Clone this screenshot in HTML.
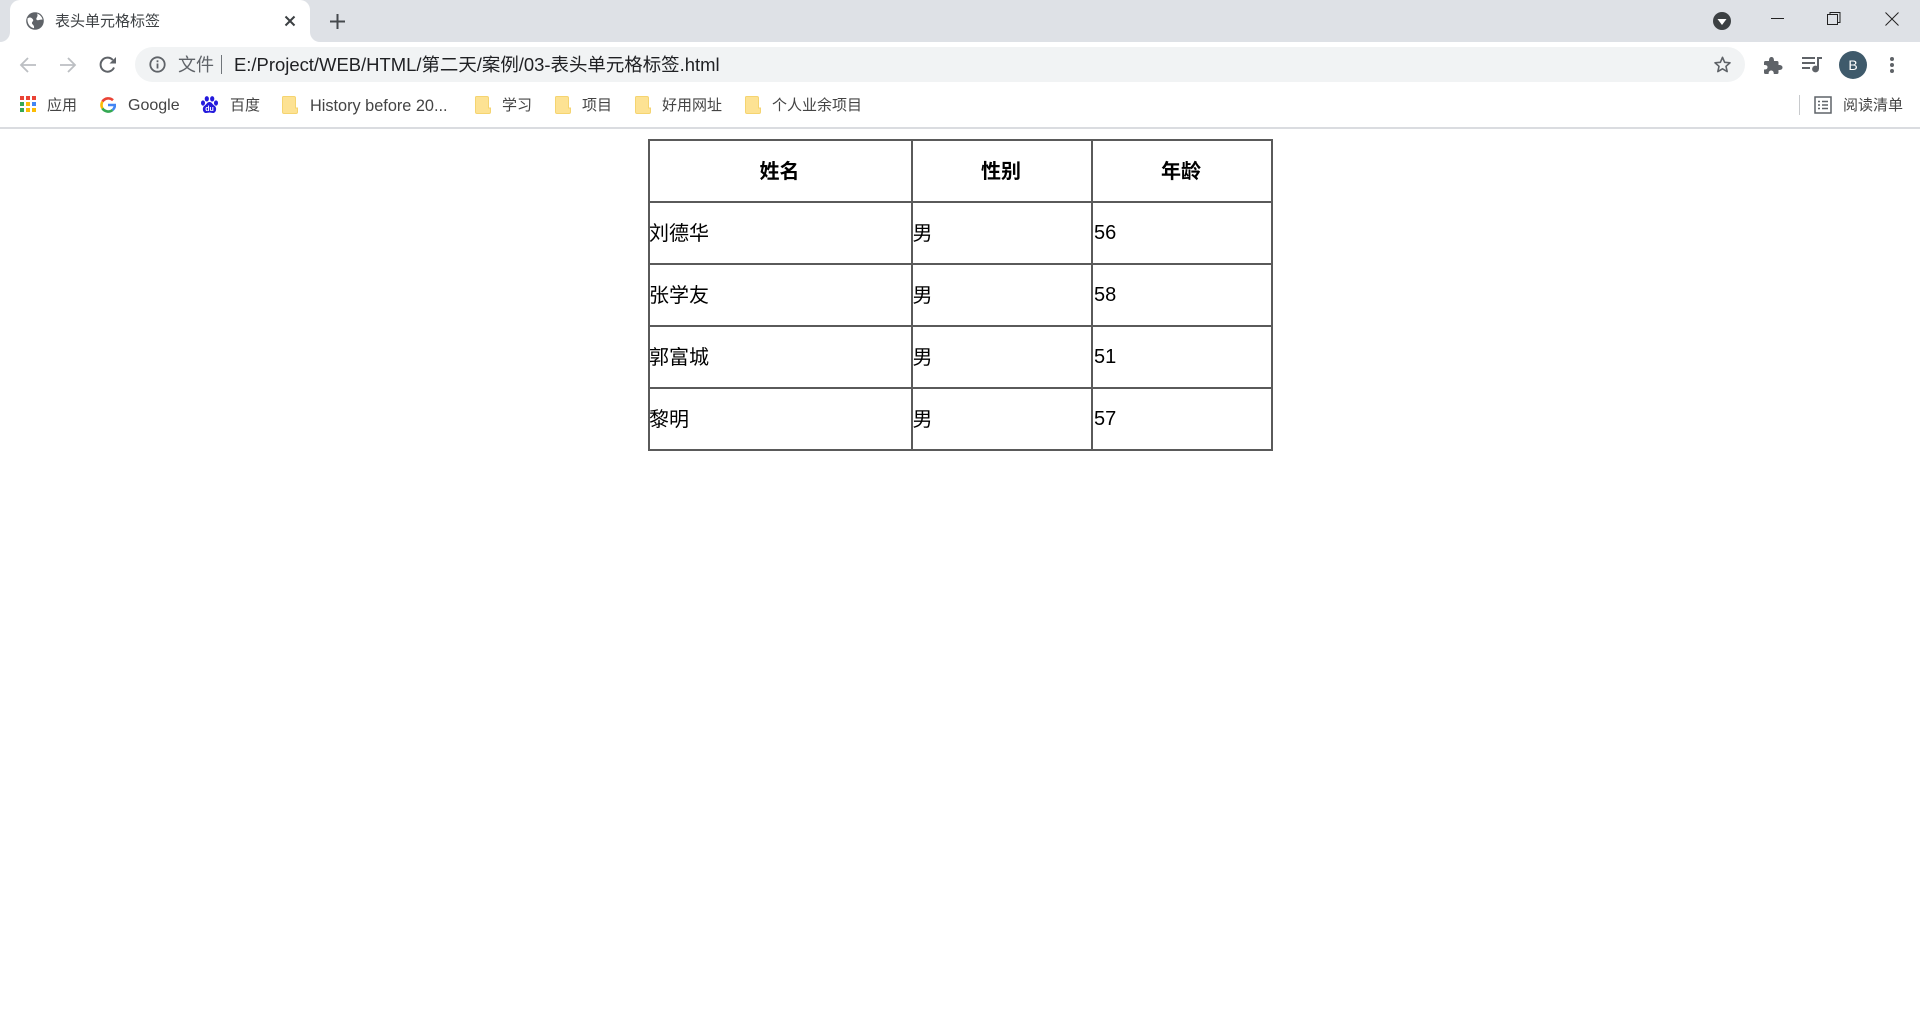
<!DOCTYPE html>
<html lang="zh">
<head>
<meta charset="utf-8">
<title>表头单元格标签</title>
<style>
html,body{margin:0;padding:0;width:1920px;height:1030px;overflow:hidden;background:#fff;font-family:"Liberation Sans","Noto Sans CJK SC",sans-serif;}
.a{position:absolute;white-space:nowrap;}
svg{position:absolute;display:block;}
.bm{position:absolute;top:96px;height:20px;line-height:20px;font-size:15px;color:#444;white-space:nowrap;}
.l{position:absolute;background:#5a5a5a;}
.c{position:absolute;height:30px;line-height:30px;font-size:20px;color:#000;white-space:nowrap;}
.th{font-weight:bold;text-align:center;}
</style>
</head>
<body>
<div class="a" style="left:0;top:0;width:1920px;height:42px;background:#dee1e6;"></div>
<div class="a" style="left:10px;top:0;width:300px;height:42px;background:#fff;border-radius:10px 10px 0 0;"></div>
<svg style="left:0;top:32px" width="10" height="10" viewBox="0 0 10 10"><path d="M0 10A10 10 0 0 0 10 0V10Z" fill="#fff"/></svg>
<svg style="left:310px;top:32px" width="10" height="10" viewBox="0 0 10 10"><path d="M10 10A10 10 0 0 1 0 0V10Z" fill="#fff"/></svg>
<svg style="left:26px;top:12px" width="18" height="18" viewBox="0 0 18 18"><circle cx="9" cy="9" r="8.8" fill="#5f6368"/><path d="M1.5 6.5C4 4.5 6 6 7 7.5C8 9.5 5.5 9.5 6 11.5C6.5 13 8.5 13 8 16.2C4 15.5 1 11.5 1.5 6.5ZM10.5 6C11.5 4.5 12 3 11 1.5C14 2.5 16 5 16.6 7.5C14.5 7.5 13.5 8 12 8.2C10.5 8.4 10 7 10.5 6Z" fill="#fff"/></svg>
<div class="a" style="left:55px;top:12px;height:20px;line-height:20px;font-size:15px;color:#3c4043;">表头单元格标签</div>
<svg style="left:284px;top:15px" width="12" height="12" viewBox="0 0 12 12"><path d="M1.5 1.5L10.5 10.5M10.5 1.5L1.5 10.5" stroke="#3c4043" stroke-width="2"/></svg>
<svg style="left:330px;top:14px" width="15" height="15" viewBox="0 0 15 15"><path d="M7.5 0V15M0 7.5H15" stroke="#45494d" stroke-width="2"/></svg>

<svg style="left:1713px;top:12px" width="18" height="18" viewBox="0 0 18 18"><circle cx="9" cy="9" r="9" fill="#3c4043"/><path d="M4.5 7H13.5L9 13Z" fill="#fff"/></svg>
<div class="a" style="left:1771px;top:18px;width:13px;height:1px;background:#222;"></div>
<svg style="left:1827px;top:12px" width="14" height="14" viewBox="0 0 14 14" fill="none" stroke="#222" stroke-width="1"><rect x="0.5" y="2.5" width="10" height="10"/><path d="M3 2.5V0.5H13V10.5H10.5"/></svg>
<svg style="left:1885px;top:12px" width="14" height="14" viewBox="0 0 14 14"><path d="M.5 .5L13.5 13.5M13.5 .5L.5 13.5" stroke="#222" stroke-width="1"/></svg>

<svg style="left:19px;top:56px" width="18" height="18" viewBox="0 0 18 18" fill="none" stroke="#bcbfc3" stroke-width="1.8"><path d="M17 9H2M9 2L2 9L9 16"/></svg>
<svg style="left:59px;top:56px" width="18" height="18" viewBox="0 0 18 18" fill="none" stroke="#bcbfc3" stroke-width="1.8"><path d="M1 9H16M9 2L16 9L9 16"/></svg>
<svg style="left:99px;top:56px" width="18" height="18" viewBox="0 0 18 18"><path d="M15 11.5A7 7 0 1 1 13.8 4" fill="none" stroke="#5f6368" stroke-width="2"/><path d="M10.5 7.5H17V1Z" fill="#5f6368"/></svg>

<div class="a" style="left:135px;top:47px;width:1610px;height:35px;background:#f1f3f4;border-radius:18px;"></div>
<svg style="left:149px;top:56px" width="17" height="17" viewBox="0 0 17 17"><circle cx="8.5" cy="8.5" r="7.2" fill="none" stroke="#5f6368" stroke-width="1.8"/><rect x="7.6" y="7.5" width="1.8" height="5" fill="#5f6368"/><rect x="7.6" y="4.3" width="1.8" height="1.9" fill="#5f6368"/></svg>
<div class="a" style="left:178px;top:53px;height:25px;line-height:25px;font-size:18px;color:#5f6368;">文件</div>
<div class="a" style="left:221px;top:55px;width:1px;height:19px;background:#70757a;"></div>
<div class="a" style="left:234px;top:52px;height:25px;line-height:25px;font-size:18.45px;color:#202124;">E:/Project/WEB/HTML/第二天/案例/03-表头单元格标签.html</div>
<svg style="left:1713px;top:55px" width="19" height="19" viewBox="0 0 24 24"><path d="M12 3l2.7 6.2 6.8.6-5.1 4.5 1.5 6.6L12 17.4 6.1 20.9l1.5-6.6L2.5 9.8l6.8-.6z" fill="none" stroke="#5f6368" stroke-width="2" stroke-linejoin="round"/></svg>
<svg style="left:1763px;top:55px" width="20" height="20" viewBox="0 0 20 20"><path d="M1 7.5C1 6.5 1.5 6 2.5 6H6C6 3 7 2 8.5 2S11 3 11 6H14C15 6 15.5 6.5 15.5 7.5V10C18.5 10 19.5 11 19.5 12.5S18.5 15 15.5 15V17.5C15.5 18.5 15 19 14 19H10.8C10.8 16.5 9.8 15.5 8.2 15.5S5.6 16.5 5.6 19H2.5C1.5 19 1 18.5 1 17.5V14.5C3.5 14.5 4.5 13.8 4.5 12.2S3.5 10 1 10Z" fill="#5f6368"/></svg>
<svg style="left:1802px;top:56px" width="20" height="17" viewBox="0 0 20 17" fill="#5f6368"><rect x="0" y="1" width="13" height="2"/><rect x="0" y="6" width="13" height="2"/><rect x="0" y="11" width="8" height="2"/><rect x="15" y="1" width="2" height="12"/><rect x="15" y="1" width="5" height="2"/><circle cx="13.5" cy="13" r="3.4"/></svg>
<div class="a" style="left:1839px;top:51px;width:28px;height:28px;border-radius:50%;background:#3f5a6b;color:#fff;font-size:14px;line-height:29px;text-align:center;">B</div>
<svg style="left:1889px;top:56px" width="6" height="18" viewBox="0 0 6 18" fill="#5f6368"><circle cx="3" cy="3" r="2"/><circle cx="3" cy="9" r="2"/><circle cx="3" cy="15" r="2"/></svg>

<svg style="left:20px;top:96px" width="16" height="18" viewBox="0 0 16 18"><g><rect x="0" y="0" width="4" height="4" fill="#ea4335"/><rect x="6" y="0" width="4" height="4" fill="#ea4335"/><rect x="12" y="0" width="4" height="4" fill="#ea4335"/><rect x="0" y="6" width="4" height="4" fill="#34a853"/><rect x="6" y="6" width="4" height="4" fill="#fbbc05"/><rect x="12" y="6" width="4" height="4" fill="#4285f4"/><rect x="0" y="12" width="4" height="4" fill="#34a853"/><rect x="6" y="12" width="4" height="4" fill="#fbbc05"/><rect x="12" y="12" width="4" height="4" fill="#fbbc05"/></g></svg>
<div class="bm" style="left:47px;">应用</div>
<svg style="left:100px;top:97px" width="16" height="16" viewBox="0 0 16 16" fill="none" stroke-width="2.6"><path d="M13 3.2A7 7 0 0 0 2.4 4.6" stroke="#ea4335"/><path d="M2.4 4.6A7 7 0 0 0 2.4 11.4" stroke="#fbbc05"/><path d="M2.4 11.4A7 7 0 0 0 12.6 13" stroke="#34a853"/><path d="M12.6 13A7 7 0 0 0 15 8H8" stroke="#4285f4"/></svg>
<div class="bm" style="left:128px;font-size:16px;">Google</div>
<svg style="left:201px;top:96px" width="17" height="18" viewBox="0 0 17 18" fill="#2319dc"><ellipse cx="5.8" cy="2.8" rx="2.1" ry="2.7"/><ellipse cx="11.2" cy="2.8" rx="2.1" ry="2.7"/><ellipse cx="2" cy="7" rx="2" ry="2.6"/><ellipse cx="15" cy="7" rx="2" ry="2.6"/><path d="M8.5 6C11 6 11.5 8.5 13.8 10C16 11.5 15.5 17 12 17C10.5 17 9.5 16.5 8.5 16.5C7.5 16.5 6.5 17 5 17C1.5 17 1 11.5 3.2 10C5.5 8.5 6 6 8.5 6Z"/><text x="8.5" y="15" font-size="7" text-anchor="middle" fill="#fff" font-family="Liberation Sans,sans-serif" font-weight="bold">du</text></svg>
<div class="bm" style="left:230px;">百度</div>
<svg style="left:282px;top:96px" width="16" height="18" viewBox="0 0 16 18"><use href="#fold"/></svg>
<div class="bm" style="left:310px;font-size:16.3px;">History before 20...</div>
<svg style="left:475px;top:96px" width="16" height="18" viewBox="0 0 16 18"><use href="#fold"/></svg>
<div class="bm" style="left:502px;">学习</div>
<svg style="left:555px;top:96px" width="16" height="18" viewBox="0 0 16 18"><use href="#fold"/></svg>
<div class="bm" style="left:582px;">项目</div>
<svg style="left:635px;top:96px" width="16" height="18" viewBox="0 0 16 18"><use href="#fold"/></svg>
<div class="bm" style="left:662px;">好用网址</div>
<svg style="left:745px;top:96px" width="16" height="18" viewBox="0 0 16 18"><use href="#fold"/></svg>
<div class="bm" style="left:772px;">个人业余项目</div>
<svg width="0" height="0" style="left:0;top:0"><defs><g id="fold"><path d="M1.5.5H12Q13.5.5 13.5 2V12H15.5V16Q15.5 17.5 14 17.5H2Q.5 17.5 .5 16V1.5Q.5 .5 1.5 .5Z" fill="#fde293" stroke="#f5d470" stroke-width="1"/><path d="M13.5 2V12.5" stroke="#f5d470" stroke-width="1"/></g></defs></svg>

<div class="a" style="left:1799px;top:95px;width:1px;height:20px;background:#c8cacd;"></div>
<svg style="left:1814px;top:96px" width="18" height="18" viewBox="0 0 18 18" fill="none" stroke="#5f6368" stroke-width="1.5"><rect x="1" y="1" width="16" height="16"/><path d="M4 5.5H6M8 5.5H14M4 9H6M8 9H14M4 12.5H6M8 12.5H14"/></svg>
<div class="bm" style="left:1843px;">阅读清单</div>
<div class="a" style="left:0;top:127px;width:1920px;height:2px;background:#dadce0;"></div>

<!-- table -->
<div class="l" style="left:648px;top:139px;width:625px;height:2px;"></div>
<div class="l" style="left:648px;top:201px;width:625px;height:2px;"></div>
<div class="l" style="left:648px;top:263px;width:625px;height:2px;"></div>
<div class="l" style="left:648px;top:325px;width:625px;height:2px;"></div>
<div class="l" style="left:648px;top:387px;width:625px;height:2px;"></div>
<div class="l" style="left:648px;top:449px;width:625px;height:2px;"></div>
<div class="l" style="left:648px;top:139px;width:2px;height:312px;"></div>
<div class="l" style="left:911px;top:139px;width:2px;height:312px;"></div>
<div class="l" style="left:1091px;top:139px;width:2px;height:312px;"></div>
<div class="l" style="left:1271px;top:139px;width:2px;height:312px;"></div>

<div class="c th" style="left:649px;width:261px;top:157px;">姓名</div>
<div class="c th" style="left:912px;width:178px;top:157px;">性别</div>
<div class="c th" style="left:1092px;width:178px;top:157px;">年龄</div>

<div class="c" style="left:649px;top:219px;">刘德华</div>
<div class="c" style="left:912.5px;top:219px;">男</div>
<div class="c" style="left:1094px;top:218px;">56</div>
<div class="c" style="left:649px;top:281px;">张学友</div>
<div class="c" style="left:912.5px;top:281px;">男</div>
<div class="c" style="left:1094px;top:280px;">58</div>
<div class="c" style="left:649px;top:343px;">郭富城</div>
<div class="c" style="left:912.5px;top:343px;">男</div>
<div class="c" style="left:1094px;top:342px;">51</div>
<div class="c" style="left:649px;top:405px;">黎明</div>
<div class="c" style="left:912.5px;top:405px;">男</div>
<div class="c" style="left:1094px;top:404px;">57</div>
</body>
</html>
